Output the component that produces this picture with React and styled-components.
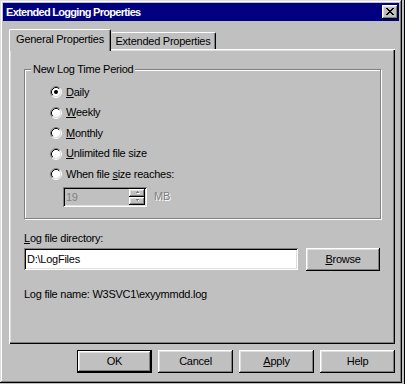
import React from 'react';
import styled, { createGlobalStyle, css } from 'styled-components';

const GlobalStyle = createGlobalStyle`
  html, body {
    margin: 0;
    padding: 0;
  }
  body {
    background: linear-gradient(to right, #c0c0c0 404px, #000 404px);
    font-family: 'Liberation Sans', Arial, sans-serif;
    font-size: 11px;
    letter-spacing: -0.25px;
    color: #000;
  }
`;

const raised = css`
  box-shadow: inset -1px -1px #000, inset 1px 1px #fff, inset -2px -2px #808080,
    inset 2px 2px #dfdfdf;
`;

const sunken = css`
  box-shadow: inset 1px 1px #808080, inset -1px -1px #fff, inset 2px 2px #000,
    inset -2px -2px #dfdfdf;
`;

const Window = styled.div`
  width: 402px;
  height: 383px;
  box-sizing: border-box;
  padding: 3px;
  background: #c0c0c0;
  box-shadow: inset -1px -1px #000, inset 1px 1px #dfdfdf, inset -2px -2px #808080,
    inset 2px 2px #fff;
  display: flex;
  flex-direction: column;
`;

const TitleBar = styled.div`
  height: 18px;
  background: #000080;
  display: flex;
  align-items: center;
  justify-content: space-between;
  padding: 0 1px 0 3px;
`;

const Title = styled.span`
  color: #fff;
  font-weight: bold;
  font-size: 11px;
  letter-spacing: -0.7px;
  line-height: 13px;
`;

const CloseButton = styled.div`
  width: 16px;
  height: 14px;
  background: #c0c0c0;
  ${raised};
  display: flex;
  align-items: center;
  justify-content: center;
  padding-bottom: 1px;
  box-sizing: border-box;
`;

const TabStrip = styled.div`
  display: flex;
  align-items: flex-end;
  margin: 8px 0 0 6px;
  height: 20px;
`;

const Tab = styled.div`
  position: relative;
  box-sizing: border-box;
  background: #c0c0c0;
  border-radius: 2px 2px 0 0;
  border-top: 1px solid #fff;
  border-left: 1px solid #fff;
  border-right: 1px solid #000;
  box-shadow: inset -1px 0 #808080;
  display: flex;
  align-items: center;
  justify-content: center;
  line-height: 13px;
  ${(p) =>
    p.$active
      ? css`
          z-index: 1;
          width: 102px;
          height: 22px;
          margin-bottom: -2px;
          padding-bottom: 2px;
        `
      : css`
          width: 105px;
          height: 17px;
          padding-top: 1px;
          border-left: none;
        `}
`;

const Panel = styled.div`
  margin-left: 6px;
  width: 386px;
  height: 295px;
  box-sizing: border-box;
  padding: 14px 14px 0 15px;
  background: #c0c0c0;
  box-shadow: inset 1px 1px #fff, inset -1px -1px #000, inset -2px -2px #808080,
    inset 2px 2px #dfdfdf;
  display: flex;
  flex-direction: column;
`;

const Group = styled.fieldset`
  margin: 0;
  width: 357px;
  box-sizing: border-box;
  border: 1px solid #808080;
  box-shadow: inset 1px 1px #fff, 1px 1px #fff;
  padding: 6px 0 11px 6px;
  min-width: 0;
`;

const Legend = styled.legend`
  padding: 0 2px;
  line-height: 13px;
  background: #c0c0c0;
`;

const Choices = styled.div`
  padding-left: 19px;
  display: flex;
  flex-direction: column;
`;

const ChoiceRow = styled.label`
  height: 20.5px;
  display: flex;
  align-items: center;
  gap: 4px;
  line-height: 13px;
`;

const Key = styled.span`
  text-decoration: underline;
  text-underline-offset: 1px;
`;

const SpinRow = styled.div`
  margin: 2px 0 0 13px;
  display: flex;
  align-items: center;
  gap: 7px;
`;

const SpinField = styled.div`
  width: 84px;
  height: 20px;
  box-sizing: border-box;
  padding: 2px;
  ${sunken};
  display: flex;
  align-items: stretch;
`;

const SpinValue = styled.span`
  flex: 1;
  padding-left: 1px;
  line-height: 16px;
  color: #808080;
`;

const SpinButtons = styled.div`
  width: 16px;
  display: flex;
  flex-direction: column;
`;

const SpinButton = styled.div`
  flex: 1;
  background: #c0c0c0;
  ${raised};
  display: flex;
  align-items: center;
  justify-content: center;
`;

const Disabled = styled.span`
  color: #808080;
  text-shadow: 1px 1px #fff;
  line-height: 13px;
`;

const FieldLabel = styled.div`
  margin-top: 13px;
  line-height: 13px;
`;

const DirRow = styled.div`
  margin-top: 3px;
  display: flex;
  align-items: flex-start;
  gap: 8px;
`;

const TextField = styled.div`
  width: 274px;
  height: 22px;
  box-sizing: border-box;
  padding: 0 3px;
  background: #fff;
  ${sunken};
  line-height: 22px;
`;

const Button = styled.div`
  width: ${(p) => p.$width || 75}px;
  height: 23px;
  box-sizing: border-box;
  background: #c0c0c0;
  display: flex;
  align-items: center;
  justify-content: center;
  line-height: 13px;
  ${raised};
  ${(p) =>
    p.$default &&
    css`
      border: 1px solid #000;
    `}
`;

const InfoText = styled.div`
  margin-top: 17px;
  line-height: 13px;
`;

const ButtonRow = styled.div`
  margin: 6px 4px 0 0;
  display: flex;
  justify-content: flex-end;
  gap: 6px;
`;

const Radio = ({ checked }) => (
  <svg width="12" height="12" viewBox="0 0 12 12">
    <circle cx="6" cy="6" r="4.5" fill="#fff" />
    <path d="M9.89 2.11 A5.5 5.5 0 0 0 2.11 9.89" stroke="#808080" fill="none" />
    <path d="M2.11 9.89 A5.5 5.5 0 0 0 9.89 2.11" stroke="#fff" fill="none" />
    <path d="M9.18 2.82 A4.5 4.5 0 0 0 2.82 9.18" stroke="#000" fill="none" />
    <path d="M2.82 9.18 A4.5 4.5 0 0 0 9.18 2.82" stroke="#dfdfdf" fill="none" />
    {checked && <circle cx="6" cy="6" r="2" fill="#000" />}
  </svg>
);

const Arrow = ({ up }) => (
  <svg width="5" height="3" viewBox="0 0 5 3" shapeRendering="crispEdges">
    {up ? (
      <>
        <rect x="2" y="0" width="1" height="1" fill="#808080" />
        <rect x="1" y="1" width="3" height="1" fill="#808080" />
        <rect x="2" y="2" width="3" height="1" fill="#fff" />
      </>
    ) : (
      <>
        <rect x="1" y="0" width="3" height="1" fill="#808080" />
        <rect x="2" y="1" width="1" height="1" fill="#808080" />
        <rect x="3" y="1" width="1" height="1" fill="#fff" />
      </>
    )}
  </svg>
);

const CloseIcon = () => (
  <svg width="8" height="7" viewBox="0 0 8 7" shapeRendering="crispEdges">
    {[0, 1, 2, 3, 4, 5, 6].map((i) => (
      <React.Fragment key={i}>
        <rect x={i} y={i} width="2" height="1" fill="#000" />
        <rect x={6 - i} y={i} width="2" height="1" fill="#000" />
      </React.Fragment>
    ))}
  </svg>
);

const options = [
  { pre: '', key: 'D', post: 'aily', checked: true },
  { pre: '', key: 'W', post: 'eekly' },
  { pre: '', key: 'M', post: 'onthly' },
  { pre: '', key: 'U', post: 'nlimited file size' },
  { pre: 'When file ', key: 's', post: 'ize reaches:' },
];

export default function App() {
  return (
    <>
      <GlobalStyle />
      <Window>
        <TitleBar>
          <Title>Extended Logging Properties</Title>
          <CloseButton>
            <CloseIcon />
          </CloseButton>
        </TitleBar>

        <TabStrip>
          <Tab $active>General Properties</Tab>
          <Tab>Extended Properties</Tab>
        </TabStrip>

        <Panel>
          <Group>
            <Legend>New Log Time Period</Legend>
            <Choices>
              {options.map((o, i) => (
                <ChoiceRow key={i}>
                  <Radio checked={o.checked} />
                  <span>
                    {o.pre}
                    <Key>{o.key}</Key>
                    {o.post}
                  </span>
                </ChoiceRow>
              ))}
              <SpinRow>
                <SpinField>
                  <SpinValue>19</SpinValue>
                  <SpinButtons>
                    <SpinButton>
                      <Arrow up />
                    </SpinButton>
                    <SpinButton>
                      <Arrow />
                    </SpinButton>
                  </SpinButtons>
                </SpinField>
                <Disabled>MB</Disabled>
              </SpinRow>
            </Choices>
          </Group>

          <FieldLabel>
            <Key>L</Key>og file directory:
          </FieldLabel>
          <DirRow>
            <TextField>D:\LogFiles</TextField>
            <Button $width={74}>
              <span>
                <Key>B</Key>rowse
              </span>
            </Button>
          </DirRow>

          <InfoText>Log file name: W3SVC1\exyymmdd.log</InfoText>
        </Panel>

        <ButtonRow>
          <Button $default>OK</Button>
          <Button>Cancel</Button>
          <Button>
            <span>
              <Key>A</Key>pply
            </span>
          </Button>
          <Button>Help</Button>
        </ButtonRow>
      </Window>
    </>
  );
}
